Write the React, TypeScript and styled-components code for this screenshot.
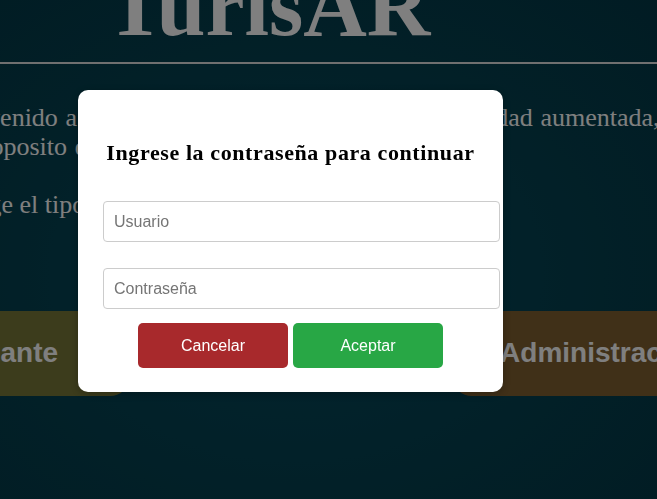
import React from "react";
import styled, { createGlobalStyle } from "styled-components";

const GlobalStyle = createGlobalStyle`
  html, body {
    margin: 0;
    padding: 0;
    overflow: hidden;
  }
  body {
    font-family: "Liberation Serif", "Times New Roman", serif;
  }
`;

const Page = styled.div`
  position: relative;
  width: 100vw;
  height: 100vh;
  overflow: hidden;
  background: radial-gradient(ellipse at 45% 55%, #054a5e 0%, #04404f 60%, #033847 100%);
  color: #ffffff;
`;

const Header = styled.header`
  display: flex;
  flex-direction: column;
`;

const Title = styled.h1`
  margin: -38px 0 0 0;
  padding-left: 106px;
  font-family: "Liberation Serif", "Times New Roman", serif;
  font-weight: 700;
  font-size: 88px;
  line-height: 1;
  color: #ffffff;
`;

const Rule = styled.hr`
  width: 100%;
  margin: 12px 0 0 0;
  border: none;
  height: 2px;
  background: #e0e0e0;
`;

const Intro = styled.section`
  margin: 40px 0 0 -62px;
  font-size: 26px;
  line-height: 28.5px;
  white-space: nowrap;
`;

const Paragraph = styled.p<{ $gap?: number; $spacing?: number }>`
  margin: 0 0 ${(p) => p.$gap ?? 0}px 0;
  word-spacing: ${(p) => p.$spacing ?? 0}px;
`;

const Choices = styled.div`
  display: flex;
  gap: 322px;
  margin: 91px 0 0 -157px;
`;

const Choice = styled.button<{ $bg: string; $width: number }>`
  flex: 0 0 ${(p) => p.$width}px;
  height: 85px;
  padding: 0;
  border: none;
  border-radius: 20px;
  background: ${(p) => p.$bg};
  color: #ffffff;
  font-family: "Liberation Sans", Arial, sans-serif;
  font-weight: 700;
  font-size: 28px;
  white-space: nowrap;
`;

const Overlay = styled.div`
  position: fixed;
  inset: 0;
  background: rgba(0, 0, 0, 0.5);
  display: flex;
  align-items: flex-start;
  padding: 90px 0 0 78px;
`;

const Modal = styled.div`
  width: 425px;
  box-sizing: border-box;
  padding: 0 25px 24px;
  background: #ffffff;
  border-radius: 10px;
  box-shadow: 0 2px 8px rgba(0, 0, 0, 0.25);
  display: flex;
  flex-direction: column;
`;

const ModalTitle = styled.h3`
  margin: 50px 0 35px;
  text-align: center;
  font-family: "Liberation Serif", "Times New Roman", serif;
  font-weight: 700;
  font-size: 22px;
  letter-spacing: 0.6px;
  color: #000000;
`;

const Field = styled.input<{ $gap?: number }>`
  box-sizing: content-box;
  width: 100%;
  padding: 10px;
  margin: 0 0 ${(p) => p.$gap ?? 0}px 0;
  border: 1px solid #cccccc;
  border-radius: 4px;
  font-family: "Liberation Sans", Arial, sans-serif;
  font-size: 16px;
  line-height: 19px;
  height: 19px;
  color: #333;
  outline: none;
  &::placeholder {
    color: #757575;
  }
`;

const Actions = styled.div`
  display: flex;
  justify-content: center;
  gap: 5px;
`;

const ActionButton = styled.button<{ $bg: string }>`
  width: 150px;
  height: 45px;
  border: none;
  border-radius: 5px;
  background: ${(p) => p.$bg};
  color: #ffffff;
  font-family: "Liberation Sans", Arial, sans-serif;
  font-size: 16px;
`;

export default function App() {
  return (
    <>
      <GlobalStyle />
      <Page>
        <Header>
          <Title>TurisAR</Title>
          <Rule />
        </Header>
        <Intro>
          <Paragraph $gap={30} $spacing={1.2}>
            Bienvenido a TurisAR, una aplicación móvil de realidad aumentada,
            <br />
            El proposito de esta app es mostrar lugares.
          </Paragraph>
          <Paragraph>Escoge el tipo de usuario:</Paragraph>
        </Intro>
        <Choices>
          <Choice $bg="#787838" $width={287}>Estudiante</Choice>
          <Choice $bg="#806030" $width={300}>Administración</Choice>
        </Choices>
        <Overlay>
          <Modal>
            <ModalTitle>Ingrese la contraseña para continuar</ModalTitle>
            <Field type="text" placeholder="Usuario" $gap={26} />
            <Field type="password" placeholder="Contraseña" $gap={14} />
            <Actions>
              <ActionButton $bg="#a8292c">Cancelar</ActionButton>
              <ActionButton $bg="#28a745">Aceptar</ActionButton>
            </Actions>
          </Modal>
        </Overlay>
      </Page>
    </>
  );
}
